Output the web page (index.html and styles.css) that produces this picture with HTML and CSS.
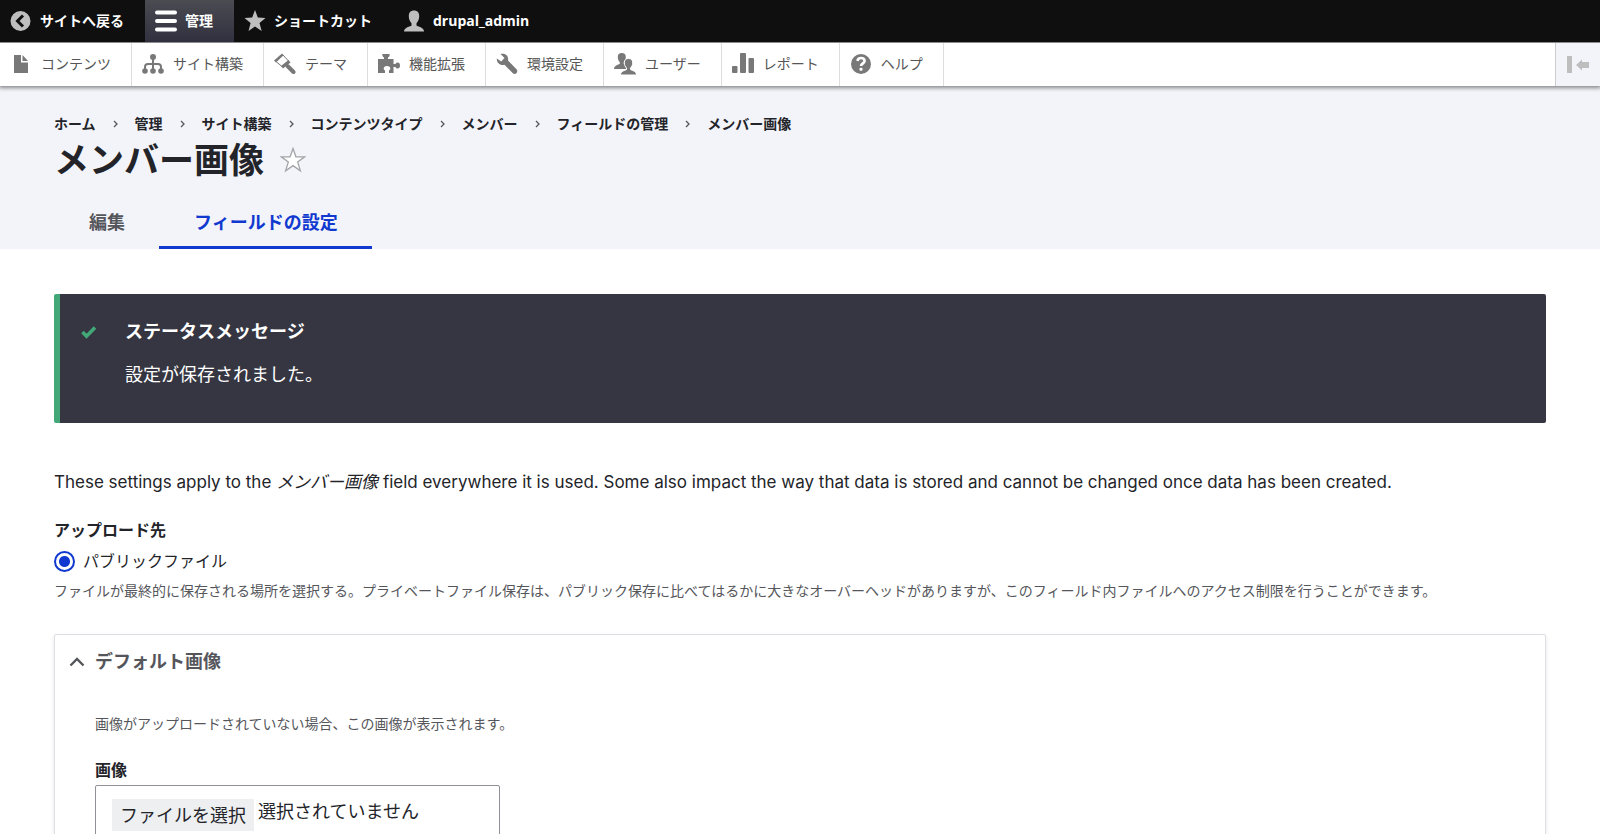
FILE: index.html
```html
<!DOCTYPE html>
<html lang="ja">
<head>
<meta charset="utf-8">
<meta name="viewport" content="width=device-width, initial-scale=1">
<title>メンバー画像</title>
<link rel="stylesheet" href="styles.css">
</head>
<body>
<div class="toolbar">
  <nav class="toolbar-bar" aria-label="ツールバー">
    <a class="bar-item" href="#"><svg class="icon" viewBox="0 0 22 22"><circle cx="10.500" cy="11" r="10" fill="#bebebe"/><path d="M13 5.500 7.500 11l5.500 5.500" fill="none" stroke="#0f0f0f" stroke-width="3"/></svg>サイトへ戻る</a>
    <a class="bar-item bar-item-active" href="#"><svg class="icon" viewBox="0 0 22 22" stroke="#fff" stroke-width="4" stroke-linecap="round"><path d="M2 2.500h18M2 11h18M2 19.500h18"/></svg>管理</a>
    <a class="bar-item" href="#"><svg class="icon" viewBox="0 0 22 22"><path d="M11 0l2.800 7.600 7.700.3-6 5 2.200 8.100L11 16.500 4.500 21l2.100-8.100-6.100-5 7.700-.3z" fill="#bebebe"/></svg>ショートカット</a>
    <a class="bar-item" href="#"><svg class="icon" viewBox="0 0 22 22"><path d="M11 .5c3.500 0 5.200 2.200 5.200 5.500 0 3-1 5.600-2.700 7.200v2.300c1 1.200 7.500 1.700 7.500 6H1c0-4.300 6.500-4.800 7.500-6v-2.300C6.800 11.600 5.800 9 5.800 6 5.800 2.700 7.500.5 11 .5z" fill="#bebebe"/></svg>drupal_admin</a>
  </nav>
  <nav class="toolbar-menu" aria-label="管理メニュー">
    <a class="menu-item" href="#"><svg class="icon" viewBox="0 0 22 22" fill="#787878"><path d="M4 2h7v7.500h7V20H4zM12.500 2l5.500 6h-5.500z"/></svg>コンテンツ</a>
    <a class="menu-item" href="#"><svg class="icon" viewBox="0 0 22 22" fill="#787878"><circle cx="11" cy="4" r="3"/><circle cx="3" cy="18" r="2.800"/><circle cx="11" cy="18" r="2.800"/><circle cx="19" cy="18" r="2.800"/><path d="M11 4v14M3 18v-4q0-3 3-3h10q3 0 3 3v4" fill="none" stroke="#787878" stroke-width="2"/></svg>サイト構築</a>
    <a class="menu-item" href="#"><svg class="icon" viewBox="0 0 22 22" fill="#787878"><path d="M0 7.500L8 .5l1.500 1.700L2 9.500z"/><path d="M8.500 1.500l6 6.500-6.500 5.500L2 8.500" fill="none" stroke="#787878"/><path d="M14.500 7l2 2.500-7.500 6-2-2.500z"/><path d="M13.500 13l6 6" stroke="#787878" stroke-width="4" stroke-linecap="round"/></svg>テーマ</a>
    <a class="menu-item" href="#"><svg class="icon" viewBox="0 0 22 22" fill="#787878"><path d="M0 6h6V4.500C5 3.800 4.300 3.500 4.300 1h7.400c0 2.500-.7 2.800-1.700 3.500V6h5.500v5h2c.5-1 1.200-1.500 2-1.500 1.800 0 2.500 1.300 2.500 3s-.7 3-2.500 3c-.8 0-1.500-.5-2-1.500h-2v6H11v-2.500c1-.5 1.300-1.200 1.300-2 0-1.500-1.200-2.500-3.300-2.500s-3.300 1-3.300 2.500c0 .8.300 1.500 1.300 2V20H0z"/></svg>機能拡張</a>
    <a class="menu-item" href="#"><svg class="icon" viewBox="0 0 22 22"><path d="M4.500 1c4-1 8.500 1.300 7.500 6.500l8.500 8.800c1.300 1.500.8 3-.2 4s-2.500 1-3.700-.2L8.500 11.700C4.500 13 .500 10 .8 5.500l4.400 3L8.500 5z" fill="#787878"/></svg>環境設定</a>
    <a class="menu-item" href="#"><svg class="icon" viewBox="0 0 22 22"><path d="M7.800 0c2.600 0 4 1.600 4 4 0 2.200-.8 4-2 5.200v1.600c.8 1 4 1.400 4 5.200H0c0-3.800 5-4.200 5.800-5.200V9.200C4.600 8 3.800 6.200 3.800 4c0-2.400 1.400-4 4-4z" fill="#787878"/><path d="M14.500 5.500c2.800 0 4.200 1.700 4.200 4.200 0 2.200-.9 4.100-2.200 5.300v1.500c.9 1 6 1.200 6 5.500h-16c0-4.300 5.100-4.500 6-5.500V15c-1.300-1.200-2.200-3.100-2.200-5.300 0-2.500 1.400-4.200 4.200-4.200z" fill="#787878" stroke="#fff"/></svg>ユーザー</a>
    <a class="menu-item" href="#"><svg class="icon" viewBox="0 0 22 22" fill="#787878"><rect x="0" y="13" width="5.500" height="7" rx="1"/><rect x="8" y="0" width="6" height="20" rx="1"/><rect x="16.500" y="5" width="5.500" height="15" rx="1"/></svg>レポート</a>
    <a class="menu-item" href="#"><svg class="icon" viewBox="0 0 22 22"><circle cx="11" cy="11" r="10" fill="#787878"/><path d="M7.500 8c.2-2 1.600-3 3.600-3 2.200 0 3.500 1.100 3.500 2.900 0 2.400-3.600 2.500-3.600 5.200" fill="none" stroke="#fff" stroke-width="2.600"/><rect x="9.500" y="14.700" width="3" height="3" rx="1" fill="#fff"/></svg>ヘルプ</a>
    <button class="menu-toggle" type="button" aria-label="垂直方向"><svg width="22" height="18" viewBox="0 0 22 18" fill="#bebebe"><path d="M0 0h5v17H0zM9 9l6-5.500V6h7v6h-7v2.500z"/></svg></button>
  </nav>
</div>

<header class="page-header">
  <nav aria-label="パンくず">
    <ol class="breadcrumb">
      <li><a href="#">ホーム</a></li>
      <li><svg class="sep" viewBox="0 0 7 8"><path d="M2 1l3 3-3 3"/></svg><a href="#">管理</a></li>
      <li><svg class="sep" viewBox="0 0 7 8"><path d="M2 1l3 3-3 3"/></svg><a href="#">サイト構築</a></li>
      <li><svg class="sep" viewBox="0 0 7 8"><path d="M2 1l3 3-3 3"/></svg><a href="#">コンテンツタイプ</a></li>
      <li><svg class="sep" viewBox="0 0 7 8"><path d="M2 1l3 3-3 3"/></svg><a href="#">メンバー</a></li>
      <li><svg class="sep" viewBox="0 0 7 8"><path d="M2 1l3 3-3 3"/></svg><a href="#">フィールドの管理</a></li>
      <li><svg class="sep" viewBox="0 0 7 8"><path d="M2 1l3 3-3 3"/></svg><a href="#">メンバー画像</a></li>
    </ol>
  </nav>
  <div class="title-row">
    <h1>メンバー画像</h1>
    <button class="star" type="button" aria-label="ショートカットに追加"><svg width="26" height="26" viewBox="0 0 26 26"><path d="M13 1.500l2.900 8.300h8.800l-7 5.300 2.700 8.700L13 18.600l-7.400 5.200 2.700-8.700-7-5.300h8.800z" fill="#fff" stroke="#a3a4a8" stroke-width="1.300"/></svg></button>
  </div>
  <nav class="tabs" aria-label="タブ">
    <a class="tab" href="#">編集</a>
    <a class="tab tab-active" href="#" aria-current="page">フィールドの設定</a>
  </nav>
</header>

<main class="content">
  <section class="message" aria-label="ステータスメッセージ">
    <svg class="check" viewBox="0 0 16 14"><path d="M1.500 7l4 4.300L14 2.500" fill="none" stroke="#42a877" stroke-width="3.500"/></svg>
    <div>
      <h2>ステータスメッセージ</h2>
      <p>設定が保存されました。</p>
    </div>
  </section>

  <form>
    <p class="intro">These settings apply to the <em>メンバー画像</em> field everywhere it is used. Some also impact the way that data is stored and cannot be changed once data has been created.</p>
    <fieldset class="upload">
      <legend>アップロード先</legend>
      <div class="radio-row">
        <input type="radio" id="public" name="scheme" checked>
        <label for="public">パブリックファイル</label>
      </div>
      <p class="description">ファイルが最終的に保存される場所を選択する。プライベートファイル保存は、パブリック保存に比べてはるかに大きなオーバーヘッドがありますが、このフィールド内ファイルへのアクセス制限を行うことができます。</p>
    </fieldset>

    <details class="panel" open>
      <summary><svg width="16" height="10" viewBox="0 0 16 10"><path d="M1.500 8.500L8 2l6.500 6.500" fill="none" stroke="#55565b" stroke-width="2.400"/></svg>デフォルト画像</summary>
      <div class="panel-body">
        <p class="description">画像がアップロードされていない場合、この画像が表示されます。</p>
        <label class="file-label" for="image">画像</label>
        <div class="file-box">
          <input class="file-input" type="file" id="image">
          <label class="file-button" for="image">ファイルを選択</label>
          <span>選択されていません</span>
        </div>
      </div>
    </details>
  </form>
</main>
</body>
</html>
```
FILE: styles.css
```css
* { box-sizing: border-box; }

body {
  margin: 0;
  background: #fff;
  color: #232429;
  font-family: Inter, "Noto Sans CJK JP", sans-serif;
  font-size: 18px;
  line-height: 26px;
}

a { color: inherit; text-decoration: none; }
h1, h2, p, ol { margin: 0; padding: 0; }
button { margin: 0; padding: 0; border: 0; background: none; }
svg { display: block; flex: none; }

.toolbar {
  position: relative;
  font-family: "Open Sans", "Noto Sans CJK JP", sans-serif;
  font-size: 14px;
  line-height: 20px;
  box-shadow: 0 1px 4px 1px rgba(0, 0, 0, 0.45);
}
.toolbar-bar {
  display: flex;
  height: 42px;
  background: #0f0f0f;
  color: #fff;
  font-weight: 700;
}
.bar-item {
  display: flex;
  align-items: center;
  gap: 8px;
  padding: 0 21px 0 10px;
}
.bar-item-active { background: linear-gradient(#4b4b52, #31303f); }
.icon { width: 22px; height: 22px; }

.toolbar-menu {
  display: flex;
  height: 44px;
  border-top: 1px solid #8b8b8b;
  background: #fff;
  color: #565656;
}
.menu-item {
  display: flex;
  align-items: center;
  gap: 9px;
  padding: 0 20px 2px 10px;
  border-right: 1px solid #ddd;
}
.menu-toggle {
  display: flex;
  align-items: center;
  margin-left: auto;
  padding: 0 11px;
  border-left: 1px solid #ccc;
  background: #f3f4f9;
}

.page-header {
  padding: 28px 54px 0;
  background: #f3f4f9;
}
.breadcrumb {
  display: flex;
  list-style: none;
  font-size: 14px;
  font-weight: 700;
  line-height: 20px;
}
.breadcrumb li { display: flex; align-items: center; }
.sep {
  width: 7px;
  height: 8px;
  margin: 0 16px;
  fill: none;
  stroke: #55565b;
  stroke-width: 1.3;
}
.title-row {
  display: flex;
  align-items: center;
  gap: 16px;
  margin: 3px 0 11px;
}
h1 { font-size: 35px; font-weight: 700; line-height: 46px; }
.tabs { display: flex; font-weight: 700; }
.tab {
  padding: 16px 34px 10px 35px;
  border-bottom: 3px solid transparent;
  color: #55565b;
}
.tab-active { border-color: #1139d0; color: #1139d0; }

.content { padding: 45px 54px 54px; }
.message {
  display: flex;
  align-items: flex-start;
  gap: 28px;
  padding: 25px 21px 35px;
  border-left: 6px solid #42a877;
  border-radius: 2px;
  background: #353641;
  color: #fff;
}
.message h2 { margin-bottom: 17px; font-size: 18px; line-height: 26px; }
.check { width: 16px; height: 14px; margin-top: 6px; }

.intro { margin: 46px 0 23px; font-size: 17px; }
.upload { margin: 0; padding: 0; border: 0; }
.upload legend, .file-label {
  display: block;
  padding: 0;
  font-size: 16px;
  font-weight: 700;
  line-height: 24px;
}
.radio-row {
  display: flex;
  align-items: center;
  gap: 8px;
  margin: 7px 0 8px;
  font-size: 16px;
  line-height: 24px;
}
.radio-row input {
  appearance: none;
  width: 21px;
  height: 21px;
  margin: 0;
  border: 2px solid #1139d0;
  border-radius: 50%;
  background: radial-gradient(circle, #1139d0 5px, #fff 6px);
}
.description {
  color: #55565b;
  font-size: 14px;
  line-height: 20px;
}

.panel {
  margin-top: 33px;
  border: 1px solid #dedfe4;
  border-radius: 2px;
  box-shadow: 0 2px 4px rgba(0, 0, 0, 0.1);
}
.panel summary {
  display: flex;
  align-items: center;
  gap: 10px;
  padding: 14px 14px 13px;
  color: #55565b;
  font-weight: 700;
}
.panel-body { padding: 26px 40px 40px; }
.file-label { margin: 24px 0 3px; }
.file-box {
  display: flex;
  align-items: flex-start;
  gap: 4px;
  width: 405px;
  max-width: 100%;
  padding: 13px 16px;
  border: 1px solid #919297;
  border-radius: 2px;
}
.file-button {
  padding: 4px 8px 2px;
  background: #eeeff1;
}
.file-input {
  position: absolute;
  width: 1px;
  height: 1px;
  opacity: 0;
}
```
